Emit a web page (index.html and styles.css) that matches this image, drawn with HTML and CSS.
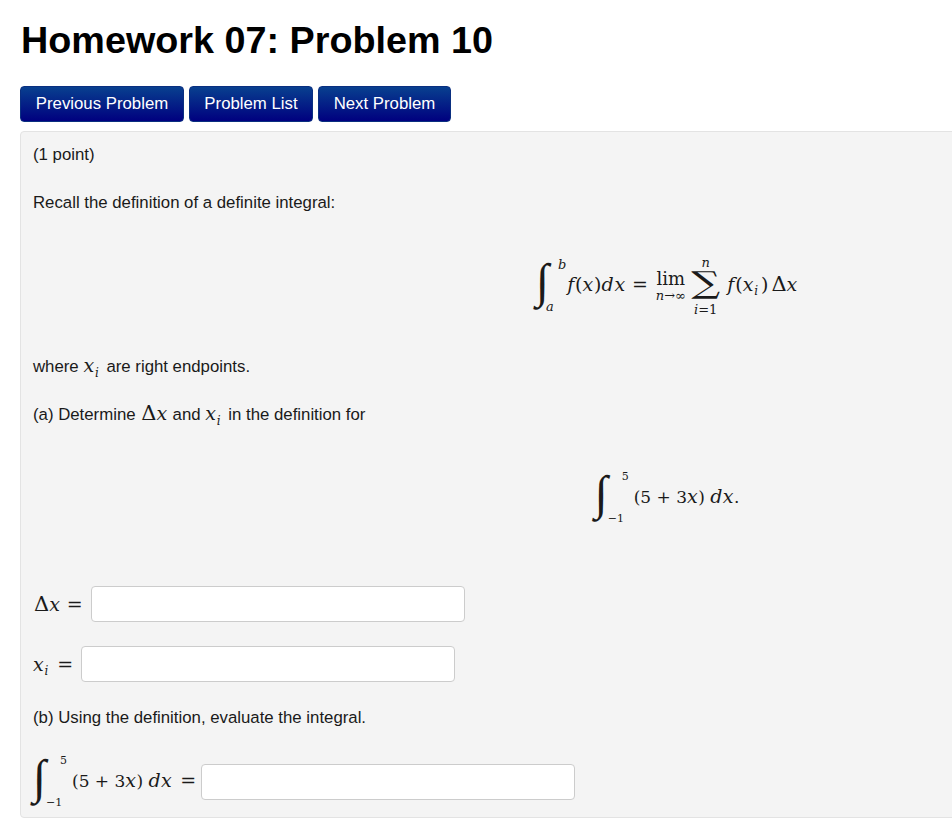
FILE: index.html
```html
<!DOCTYPE html>
<html lang="en">
<head>
  <meta charset="UTF-8">
  <meta name="viewport" content="width=device-width, initial-scale=1.0">
  <title>Homework 07: Problem 10</title>
  <link rel="stylesheet" href="styles.css">
</head>
<body>
  <h1>Homework 07: Problem 10</h1>

  <div class="nav-buttons">
    <a class="nav-button nav-prev" href="#">Previous Problem</a>
    <a class="nav-button nav-list" href="#">Problem List</a>
    <a class="nav-button nav-next" href="#">Next Problem</a>
  </div>

  <div class="problem">
    <p class="line points">(1 point)</p>
    <p class="line recall">Recall the definition of a definite integral:</p>

    <div class="display first-eq">
      <span class="math">
        <span class="int-wrap">
          <span class="int">∫</span>
          <span class="limits"><i class="lim-top">b</i><i class="lim-bottom">a</i></span>
        </span><i>f</i><span class="paren">(</span><i>x</i><span class="paren">)</span><i>dx</i><span class="eq">=</span><span class="under">
          <span class="under-main">lim</span>
          <span class="under-small"><i>n</i>→∞</span>
        </span><span class="sum">
          <i class="sum-small">n</i>
          <span class="sigma">∑</span>
          <span class="sum-small"><i>i</i>=1</span>
        </span><i>f</i><span class="paren">(</span><i>x<sub>i</sub></i><span class="paren">)</span><span class="delta">Δ</span><i>x</i>
      </span>
    </div>

    <p class="line where">where <span class="math"><i>x<sub>i</sub></i></span> are right endpoints.</p>
    <p class="line part-a">(a) Determine <span class="math"><span class="delta">Δ</span><i>x</i></span> and <span class="math"><i>x<sub>i</sub></i></span> in the definition for</p>

    <div class="display second-eq">
      <span class="math">
        <span class="int-wrap">
          <span class="int">∫</span>
          <span class="limits num"><span class="lim-top">5</span><span class="lim-bottom">−1</span></span>
        </span>(5 + 3<i>x</i>) <i>dx</i>.
      </span>
    </div>

    <div class="answer answer-dx">
      <span class="math"><span class="delta">Δ</span><i>x</i><span class="eq">=</span></span>
      <input class="answer-input" type="text">
    </div>
    <div class="answer answer-xi">
      <span class="math"><i>x<sub>i</sub></i><span class="eq">=</span></span>
      <input class="answer-input" type="text">
    </div>

    <p class="line part-b">(b) Using the definition, evaluate the integral.</p>

    <div class="answer answer-int">
      <span class="math">
        <span class="int-wrap">
          <span class="int">∫</span>
          <span class="limits num"><span class="lim-top">5</span><span class="lim-bottom">−1</span></span>
        </span>(5 + 3<i>x</i>) <i>dx</i><span class="eq">=</span>
      </span>
      <input class="answer-input" type="text">
    </div>
  </div>
</body>
</html>
```

FILE: styles.css
```css
html, body { overflow: hidden; }
body {
  margin: 0;
  padding: 0 20px;
  height: 830px;
  box-sizing: border-box;
  font-family: "Liberation Sans", Arial, sans-serif;
  font-size: 16.8px;
  line-height: 20px;
  color: #1a1a1a;
  background: #fff;
}
h1 {
  margin: 0;
  padding: 19px 0 0 1px;
  font-size: 37.75px;
  line-height: 42px;
  font-weight: bold;
  color: #000;
}
.nav-buttons {
  display: flex;
  gap: 5px;
  margin-top: 25px;
}
.nav-button {
  display: block;
  height: 36px;
  box-sizing: border-box;
  padding-top: 7px;
  line-height: 20px;
  text-align: center;
  color: #fff;
  text-decoration: none;
  background-image: linear-gradient(#08408f, #00007f);
  border: 1px solid #0a2f80;
  border-radius: 4px;
}
.nav-prev { width: 164px; }
.nav-list { width: 124px; }
.nav-next { width: 133px; }
.problem {
  width: 1294px;
  height: 687px;
  box-sizing: border-box;
  margin-top: 9px;
  padding: 13px 12px;
  background: #f4f4f4;
  border: 1px solid #e3e3e3;
  border-radius: 4px;
}
.line { margin: 0; height: 20px; }
.line .math { line-height: 0; }
.recall { margin-top: 28px; }
.where { margin-top: 36px; }
.part-a { margin-top: 28px; }
.part-b { margin-top: 26px; }

.display {
  display: flex;
  justify-content: center;
  align-items: center;
  height: 70px;
  margin-top: 38px;
}

.math {
  font-family: "DejaVu Serif", "Liberation Serif", serif;
  font-size: 17px;
  line-height: 20px;
  white-space: nowrap;
}
.math i { font-size: 19px; letter-spacing: 0.8px; }
.second-eq i, .answer-int i { letter-spacing: 0.4px; }
.math sub { margin-right: 3px; font-size: 12px; line-height: 0; letter-spacing: 0; }
.paren { font-size: 19px; }
.delta { margin-left: 1px; font-size: 21px; line-height: 0; }
.first-eq .delta { margin-left: 3px; }
.eq { margin: 0 6px; font-size: 19px; }
.first-eq .eq { margin-right: 8px; }
.answer-int .eq { margin: 0 8px; }

.int-wrap {
  display: inline-flex;
  align-items: center;
  vertical-align: middle;
  height: 58px;
  margin-right: 5px;
}
.first-eq .int-wrap { margin-right: 1px; }
.int {
  width: 20px;
  margin-top: -10px;
  font-family: "Liberation Serif", serif;
  font-size: 48px;
  line-height: 58px;
}
.limits {
  display: flex;
  flex-direction: column;
  justify-content: space-between;
  height: 56px;
  margin-left: -10px;
  font-size: 11px;
  line-height: 14px;
}
.math .limits i { font-size: 13px; letter-spacing: 0; }
.limits .lim-top { margin-left: 12px; }
.limits.num { margin-left: -7px; }
.limits.num .lim-top { margin-left: 14px; }
.limits.num .lim-bottom { margin-left: 0; }
.under, .sum {
  display: inline-flex;
  flex-direction: column;
  align-items: center;
  vertical-align: middle;
}
.under { margin-right: 5px; }
.sum { margin-right: 7px; }
.under-main { line-height: 20px; font-size: 18px; }
.under-small, .sum-small { font-size: 13px; line-height: 14px; }
.math .under-small i, .math .sum-small i, .math i.sum-small { font-size: 13px; letter-spacing: 0; }
.sigma {
  display: inline-block;
  margin: 0 4px 7px;
  font-size: 30px;
  line-height: 26px;
  transform: scaleX(1.35);
}

.answer {
  display: flex;
  align-items: center;
  height: 36px;
}
.answer .math { flex: none; }
.answer-input {
  width: 374px;
  height: 36px;
  box-sizing: border-box;
  padding: 4px 6px;
  background: #fff;
  border: 1px solid #ccc;
  border-radius: 4px;
}
.answer-dx { margin-top: 53px; }
.answer-dx .math { width: 58px; }
.answer-xi { margin-top: 24px; }
.answer-xi .math { width: 48px; }
.answer-int { margin-top: 36px; }
.answer-int .math { width: 168px; }
```
